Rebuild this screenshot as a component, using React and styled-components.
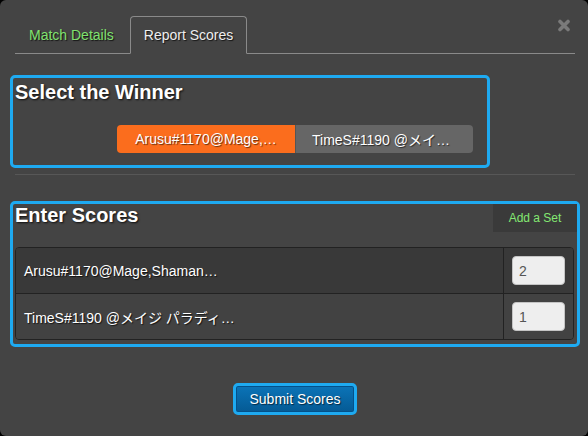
import { styled, createGlobalStyle } from "styled-components";

const GlobalStyle = createGlobalStyle`
  html, body {
    margin: 0;
    padding: 0;
    background: #000;
  }
  body {
    font-family: "Liberation Sans", Arial, "Noto Sans CJK JP", sans-serif;
    font-size: 14px;
    color: #fff;
  }
`;

const Modal = styled.div`
  position: relative;
  box-sizing: border-box;
  width: 588px;
  height: 436px;
  background-color: #444;
  border-radius: 6px;
  padding: 16px 8px 0 10px;
`;

const Close = styled.button`
  position: absolute;
  top: 19px;
  right: 17px;
  display: flex;
  padding: 0;
  border: none;
  background: none;
  cursor: pointer;
`;

const Tabs = styled.ul`
  display: flex;
  list-style: none;
  margin: 0 5px 0 5px;
  padding: 0;
  border-bottom: 1px solid #8a8a8a;
`;

const Tab = styled.li`
  margin: 0 2px -1px 0;
  padding: 8px 13px;
  line-height: 20px;
  font-size: 14px;
  border: 1px solid ${(p) => (p.$active ? "#8a8a8a" : "transparent")};
  border-bottom-color: ${(p) => (p.$active ? "#444" : "transparent")};
  border-radius: 4px 4px 0 0;
  color: ${(p) => (p.$active ? "#eee" : "#80e26f")};
  text-shadow: 1px 1px 1px rgba(0, 0, 0, 0.7);
  cursor: pointer;
`;

const Section = styled.section`
  box-sizing: border-box;
  width: ${(p) => p.$width};
  margin-top: ${(p) => p.$top};
  border: 3px solid #1eaaf1;
  border-radius: 5px;
  padding: ${(p) => p.$pad};
`;

const Title = styled.h3`
  margin: 0;
  font-size: 20px;
  line-height: 22px;
  font-weight: bold;
  color: #fff;
  text-shadow: 1px 1px 2px rgba(0, 0, 0, 0.8);
`;

const BtnGroup = styled.div`
  display: flex;
  margin: 22px 0 0 102px;
`;

const WinnerBtn = styled.button`
  box-sizing: border-box;
  width: 178px;
  height: 28px;
  padding: 0 16px;
  border: none;
  background-color: ${(p) => (p.$active ? "#fb6d1d" : "#666")};
  color: #fff;
  font-family: inherit;
  font-size: 14px;
  text-align: center;
  white-space: nowrap;
  overflow: hidden;
  text-overflow: ellipsis;
  text-shadow: 1px 1px 1px rgba(0, 0, 0, 0.6);
  cursor: pointer;

  &:first-child {
    border-radius: 4px 0 0 4px;
  }
  &:last-child {
    border-radius: 0 4px 4px 0;
    border-left: 1px solid #555;
  }
`;

const Divider = styled.hr`
  margin: 6px 5px 0 5px;
  border: none;
  border-top: 1px solid #575757;
`;

const ScoresHead = styled.div`
  display: flex;
  justify-content: space-between;
  align-items: flex-start;
`;

const AddSet = styled.button`
  box-sizing: border-box;
  width: 84px;
  height: 28px;
  padding: 0;
  border: none;
  background-color: #3a3a3a;
  color: #84e872;
  font-family: inherit;
  font-size: 12px;
  cursor: pointer;
`;

const Table = styled.div`
  margin: 15px 3px 4px 0;
  border: 1px solid #222;
  border-radius: 4px;
  overflow: hidden;
`;

const Row = styled.div`
  display: grid;
  grid-template-columns: 1fr 70px;
  background-color: ${(p) => (p.$odd ? "#393939" : "#424242")};

  & + & {
    border-top: 1px solid #222;
  }
`;

const NameCell = styled.div`
  display: flex;
  align-items: center;
  padding: 0 8px;
  font-size: 14px;
  white-space: nowrap;
  text-shadow: 1px 1px 1px rgba(0, 0, 0, 0.7);
`;

const ScoreCell = styled.div`
  border-left: 1px solid #222;
  padding: 8px;
`;

const ScoreInput = styled.input`
  box-sizing: border-box;
  display: block;
  width: 53px;
  height: 29px;
  padding: 0 6px;
  border: 1px solid #c4c4c4;
  border-radius: 4px;
  background-color: #eee;
  color: #555;
  font-family: inherit;
  font-size: 14px;
`;

const Footer = styled.div`
  display: flex;
  justify-content: center;
  margin-top: 36px;
`;

const SubmitBtn = styled.button`
  box-sizing: border-box;
  height: 32px;
  padding: 0 13px;
  border: 3px solid #1eaaf1;
  border-radius: 5px;
  background: linear-gradient(#0b74b8, #055a94);
  box-shadow: inset 0 0 0 1px #04518a;
  color: #fff;
  font-family: inherit;
  font-size: 14px;
  text-shadow: 1px 1px 1px rgba(0, 0, 0, 0.6);
  cursor: pointer;
`;

const players = [
  { name: "Arusu#1170@Mage,Shaman…", short: "Arusu#1170@Mage,…", score: "2" },
  { name: "TimeS#1190 @メイジ パラディ…", short: "TimeS#1190 @メイジ…", score: "1" },
];

const App = () => {
  return (
    <>
      <GlobalStyle />
      <Modal>
        <Close aria-label="Close">
          <svg width="14" height="13" viewBox="0 0 14 13">
            <path
              d="M3 2.5 L11 10.5 M11 2.5 L3 10.5"
              stroke="#7a7a7a"
              strokeWidth="3.6"
              strokeLinecap="round"
            />
          </svg>
        </Close>
        <Tabs>
          <Tab>Match Details</Tab>
          <Tab $active>Report Scores</Tab>
        </Tabs>

        <Section $width="480px" $top="21px" $pad="3px 2px 12px 2px">
          <Title>Select the Winner</Title>
          <BtnGroup>
            {players.map((p, i) => (
              <WinnerBtn key={p.short} $active={i === 0}>
                {p.short}
              </WinnerBtn>
            ))}
          </BtnGroup>
        </Section>

        <Divider />

        <Section $width="570px" $top="26px" $pad="0 0 0 2px">
          <ScoresHead>
            <Title>Enter Scores</Title>
            <AddSet>Add a Set</AddSet>
          </ScoresHead>
          <Table>
            {players.map((p, i) => (
              <Row key={p.name} $odd={i === 0}>
                <NameCell>{p.name}</NameCell>
                <ScoreCell>
                  <ScoreInput defaultValue={p.score} />
                </ScoreCell>
              </Row>
            ))}
          </Table>
        </Section>

        <Footer>
          <SubmitBtn>Submit Scores</SubmitBtn>
        </Footer>
      </Modal>
    </>
  );
};

export default App;
